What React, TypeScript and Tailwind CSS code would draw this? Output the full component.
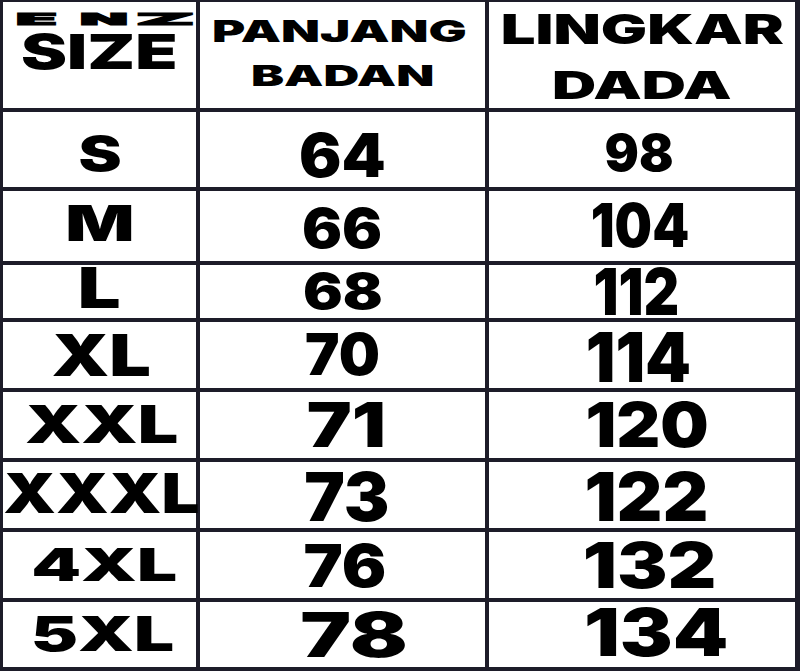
import React from 'react';

// per-cell font size / horizontal stretch / nudge, tuned against the printed chart
const ROWS = [
  { size: 'S', sc: 'text-[48px] scale-x-[1.35] translate-y-[5px]', len: '64', lc: 'text-[60px] scale-x-[1.05] translate-y-[5px]', chest: '98', cc: 'text-[51px] scale-x-[1.0] translate-y-[4px] -translate-x-[3px]' },
  { size: 'M', sc: 'text-[50px] scale-x-[1.45] -translate-y-[3px]', len: '66', lc: 'text-[55px] scale-x-[1.08] translate-y-[2px]', chest: '104', cc: 'text-[60px] scale-x-[0.88] -translate-y-[1px] -translate-x-[2px]' },
  { size: 'L', sc: 'text-[57px] scale-x-[1.33] -translate-y-[4px]', len: '68', lc: 'text-[50px] scale-x-[1.18] -translate-y-[1px]', chest: '112', cc: 'text-[65px] scale-x-[0.85] -translate-x-[6px]' },
  { size: 'XL', sc: 'text-[58px] scale-x-[1.27] translate-x-[2px]', len: '70', lc: 'text-[58px] scale-x-[1.0] -translate-y-[1px]', chest: '114', cc: 'text-[69px] scale-x-[0.95] translate-y-[3px] -translate-x-[4px]' },
  { size: 'XXL', sc: 'text-[52px] scale-x-[1.38] translate-x-[2px]', len: '71', lc: 'text-[62px] scale-x-[1.22] translate-x-[4px]', chest: '120', cc: 'text-[62px] scale-x-[1.1] translate-x-[5px]' },
  { size: 'XXXL', sc: 'text-[55px] scale-x-[1.22] translate-x-[2px] -translate-y-[2px]', len: '73', lc: 'text-[67px] scale-x-[1.02] translate-y-[2px] translate-x-[4px]', chest: '122', cc: 'text-[67px] scale-x-[1.06] translate-y-[2px] translate-x-[4px]' },
  { size: '4XL', sc: 'text-[45px] scale-x-[1.58] translate-x-[5px]', len: '76', lc: 'text-[59px] scale-x-[1.12] translate-y-[1px] translate-x-[2px]', chest: '132', cc: 'text-[63px] scale-x-[1.2] translate-x-[8px]' },
  { size: '5XL', sc: 'text-[48px] scale-x-[1.48] translate-x-[3px]', len: '78', lc: 'text-[62px] scale-x-[1.38] translate-x-[12px]', chest: '134', cc: 'text-[66px] scale-x-[1.2] -translate-y-[2px] translate-x-[14px]' },
];

function Cell({ children }: { children: React.ReactNode }) {
  return <div className="flex items-center justify-center bg-white">{children}</div>;
}

export default function App() {
  return (
    <div className="h-[671px] w-[800px] bg-[#1d1c29] pt-[2px] pr-[5px] pb-[4px] pl-[3px] font-['Inter',sans-serif] font-black text-black leading-none">
      <div className="grid h-full grid-cols-[193px_285px_306px] grid-rows-[106px_75px_70px_53px_66px_66px_66px_66px_65px] gap-[4px]">
        {/* header */}
        <div className="flex flex-col bg-white">
          {/* squashed, widely stretched brand letters */}
          <div className="mt-[5px] flex h-[24px] items-center pl-[14px] [-webkit-text-stroke:3px_#000]">
            <span className="flex w-[38px] justify-center">
              <span className="inline-block scale-x-[1.5] scale-y-[0.37] text-[44px]">E</span>
            </span>
            <span className="ml-[25px] flex w-[48px] justify-center">
              <span className="inline-block scale-x-[1.4] scale-y-[0.37] text-[44px]">N</span>
            </span>
            <span className="ml-[10px] flex w-[55px] justify-center">
              <span className="inline-block scale-x-[1.9] scale-y-[0.37] text-[44px]">Z</span>
            </span>
          </div>
          <div className="-mt-[3px] flex justify-center">
            <span className="inline-block scale-x-[1.44] text-[48px]">SIZE</span>
          </div>
        </div>
        <div className="flex flex-col items-center bg-white pt-[14px]">
          <span className="inline-block -translate-x-[3px] scale-x-[1.69] text-[30px]">PANJANG</span>
          <span className="mt-[15px] inline-block scale-x-[1.71] text-[29px]">BADAN</span>
        </div>
        <div className="flex flex-col items-center bg-white pt-[7px]">
          <span className="inline-block scale-x-[1.5] text-[41px]">LINGKAR</span>
          <span className="mt-[16px] inline-block scale-x-[1.61] text-[38px]">DADA</span>
        </div>

        {ROWS.map((r) => (
          <React.Fragment key={r.size}>
            <Cell><span className={`inline-block leading-[0.8] ${r.sc}`}>{r.size}</span></Cell>
            <Cell><span className={`inline-block leading-[0.8] ${r.lc}`}>{r.len}</span></Cell>
            <Cell><span className={`inline-block leading-[0.8] ${r.cc}`}>{r.chest}</span></Cell>
          </React.Fragment>
        ))}
      </div>
    </div>
  );
}
